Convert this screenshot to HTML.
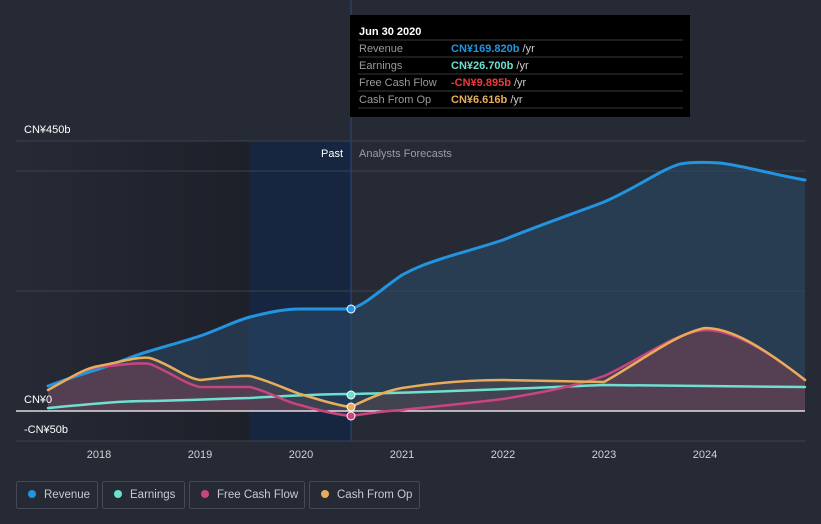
<!DOCTYPE html>
<html><head><meta charset="utf-8"><style>
body{margin:0;background:#262a35;font-family:"Liberation Sans",sans-serif;}
svg{display:block}
</style></head><body>
<svg width="821" height="524" xmlns="http://www.w3.org/2000/svg" font-family="Liberation Sans, sans-serif">
<defs>
<linearGradient id="dk" x1="0" x2="1"><stop offset="0" stop-color="#262a35"/><stop offset="1" stop-color="#1d2029"/></linearGradient>
</defs>
<rect width="821" height="524" fill="#262a35"/>
<rect x="16" y="141" width="233" height="300" fill="url(#dk)"/>
<rect x="249" y="141" width="102" height="300" fill="#172640"/>
<line x1="351" y1="0" x2="351" y2="441" stroke="#2c4a78" stroke-width="1"/>
<g stroke="#3c414d" stroke-width="1">
<line x1="16" y1="141" x2="805" y2="141"/><line x1="16" y1="171" x2="805" y2="171"/>
<line x1="16" y1="291" x2="805" y2="291"/><line x1="16" y1="441" x2="805" y2="441"/>
</g>
<!-- revenue area -->
<path d="M48,386 C70,378 85,373 99,369 C120,362 135,355 150,351 C170,345 185,341 200,336 C220,329 235,321 250,317 C270,312 285,309 300,309 L351,309 C365,305 380,290 402,275 C420,265 435,261 450,256 C470,250 485,246 503,240 C540,225 575,213 604,202 C640,186 660,170 680,164 C690,162 705,162 720,163 C745,166 770,174 805,180 L805,411 L48,411 Z" fill="#2a4a6a" opacity="0.55"/>
<path d="M48,390 C70,378 85,368 99,366 C120,362 140,356 150,358 C170,364 185,378 200,380 C220,378 240,375 250,376 C270,381 285,389 300,394 C320,400 340,406 351,407 C365,400 385,391 402,388 C440,382 470,380 503,380 L604,382 C640,362 675,334 705,328 C730,328 760,345 805,380 L805,411 L48,411 Z" fill="#5a4a4e" opacity="0.5"/>
<path d="M48,390 C70,378 85,368 99,367 C120,365 140,362 150,364 C170,372 185,384 200,387 L250,387 C270,392 285,402 300,405 C320,411 340,415 351,416 C370,413 385,411 402,410 C440,406 470,403 503,399 C550,391 575,386 604,376 C640,360 675,332 705,330 C730,330 760,345 805,380 L805,411 L48,411 Z" fill="#7a3a5a" opacity="0.35"/>
<line x1="16" y1="411" x2="805" y2="411" stroke="#ffffff" stroke-width="1.3"/>
<g fill="none" stroke-width="3" stroke-linecap="round">
<path d="M48,386 C70,378 85,373 99,369 C120,362 135,355 150,351 C170,345 185,341 200,336 C220,329 235,321 250,317 C270,312 285,309 300,309 L351,309 C365,305 380,290 402,275 C420,265 435,261 450,256 C470,250 485,246 503,240 C540,225 575,213 604,202 C640,186 660,170 680,164 C690,162 705,162 720,163 C745,166 770,174 805,180" stroke="#2394df"/>
<path d="M48,408 C90,404 120,401 150,401 C200,400 240,398 250,398 C300,395 330,394 351,394 C450,392 550,387 604,385 C700,386 760,386 805,387" stroke="#6ee0cf" stroke-width="2.5"/>
<path d="M48,390 C70,378 85,368 99,367 C120,365 140,362 150,364 C170,372 185,384 200,387 L250,387 C270,392 285,402 300,405 C320,411 340,415 351,416 C370,413 385,411 402,410 C440,406 470,403 503,399 C550,391 575,386 604,376 C640,360 675,332 705,330 C730,330 760,345 805,380" stroke="#c9457f" stroke-width="2.5"/>
<path d="M48,390 C70,378 85,368 99,366 C120,362 140,356 150,358 C170,364 185,378 200,380 C220,378 240,375 250,376 C270,381 285,389 300,394 C320,400 340,406 351,407 C365,400 385,391 402,388 C440,382 470,380 503,380 L604,382 C640,362 675,334 705,328 C730,328 760,345 805,380" stroke="#e8ad5a" stroke-width="2.5"/>
</g>
<g stroke="#fff" stroke-width="1">
<circle cx="351" cy="309" r="4" fill="#2394df"/>
<circle cx="351" cy="395" r="4" fill="#6ee0cf"/>
<circle cx="351" cy="407" r="4" fill="#e8ad5a"/>
<circle cx="351" cy="416" r="4" fill="#c9457f"/>
</g>
<g font-size="11" fill="#fff">
<text x="24" y="133">CN¥450b</text>
<text x="24" y="403">CN¥0</text>
<text x="24" y="433">-CN¥50b</text>
<text x="343" y="157" text-anchor="end">Past</text>
<text x="359" y="157" fill="#9a9ea6">Analysts Forecasts</text>
<g text-anchor="middle" fill="#d0d2d6"><text x="99" y="458">2018</text><text x="200" y="458">2019</text><text x="301" y="458">2020</text><text x="402" y="458">2021</text><text x="503" y="458">2022</text><text x="604" y="458">2023</text><text x="705" y="458">2024</text></g>
</g>
<!-- tooltip -->
<rect x="350" y="15" width="340" height="102" fill="#000"/>
<g stroke="#3a3a3a"><line x1="358" y1="40" x2="683" y2="40"/><line x1="358" y1="57" x2="683" y2="57"/><line x1="358" y1="74" x2="683" y2="74"/><line x1="358" y1="91" x2="683" y2="91"/><line x1="358" y1="108" x2="683" y2="108"/></g>
<g font-size="11">
<text x="359" y="35" fill="#fff" font-weight="bold">Jun 30 2020</text>
<text x="359" y="52" fill="#9a9a9a">Revenue</text>
<text x="359" y="69" fill="#9a9a9a">Earnings</text>
<text x="359" y="86" fill="#9a9a9a">Free Cash Flow</text>
<text x="359" y="103" fill="#9a9a9a">Cash From Op</text>
<text x="451" y="52"><tspan fill="#2394df" font-weight="bold">CN¥169.820b</tspan><tspan fill="#ccc"> /yr</tspan></text>
<text x="451" y="69"><tspan fill="#6ee0cf" font-weight="bold">CN¥26.700b</tspan><tspan fill="#ccc"> /yr</tspan></text>
<text x="451" y="86"><tspan fill="#f03a3a" font-weight="bold">-CN¥9.895b</tspan><tspan fill="#ccc"> /yr</tspan></text>
<text x="451" y="103"><tspan fill="#e8ad5a" font-weight="bold">CN¥6.616b</tspan><tspan fill="#ccc"> /yr</tspan></text>
</g>
<!-- legend -->
<g fill="none" stroke="#454a56"><rect x="16.5" y="481.5" width="81" height="27" rx="2"/><rect x="102.5" y="481.5" width="82" height="27" rx="2"/><rect x="189.5" y="481.5" width="115" height="27" rx="2"/><rect x="309.5" y="481.5" width="110" height="27" rx="2"/></g>
<circle cx="32" cy="494" r="4" fill="#2394df"/><circle cx="118" cy="494" r="4" fill="#6ee0cf"/><circle cx="205" cy="494" r="4" fill="#c9457f"/><circle cx="325" cy="494" r="4" fill="#e8ad5a"/>
<g font-size="11.5" fill="#c8cad0"><text x="44" y="498">Revenue</text><text x="130" y="498">Earnings</text><text x="217" y="498">Free Cash Flow</text><text x="337" y="498">Cash From Op</text></g>
</svg>
</body></html>
